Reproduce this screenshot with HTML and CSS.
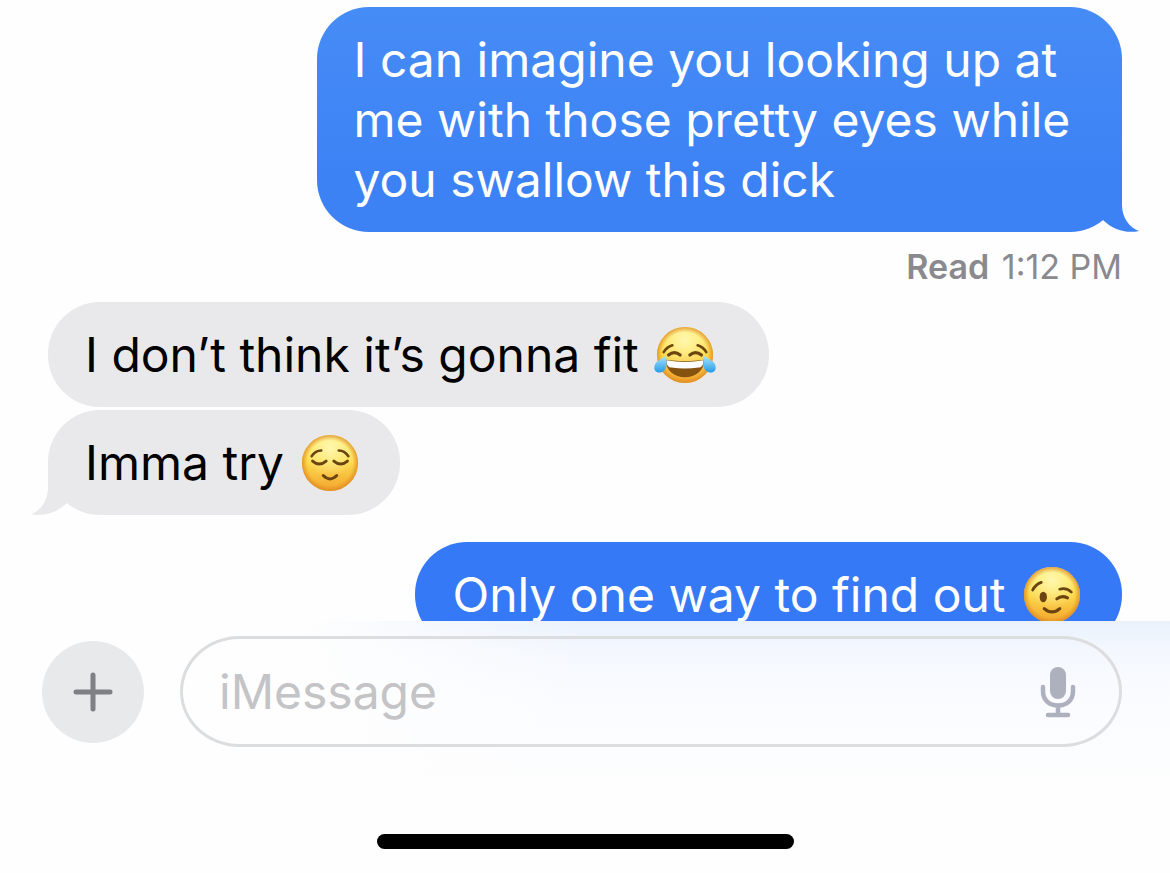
FILE: index.html
```html
<!DOCTYPE html>
<html lang="en">
    <head>
        <meta charset="utf-8">
        <title>Messages</title>
        <link rel="stylesheet" href="styles.css">
    </head>
    <body>
        <svg class="defs" aria-hidden="true">
            <defs>
                <linearGradient id="face" x1="0" y1="0" x2="0" y2="1">
                    <stop offset="0" stop-color="#fff073"/>
                    <stop offset=".45" stop-color="#fddc4c"/>
                    <stop offset="1" stop-color="#f3a52f"/>
                </linearGradient>
                <radialGradient id="edge">
                    <stop offset=".8" stop-color="#e08a1e" stop-opacity="0"/>
                    <stop offset="1" stop-color="#d98420" stop-opacity=".75"/>
                </radialGradient>
                <radialGradient id="shine" cx=".5" cy=".25" r=".5">
                    <stop offset="0" stop-color="#fffbc0" stop-opacity=".8"/>
                    <stop offset="1" stop-color="#fffbc0" stop-opacity="0"/>
                </radialGradient>
                <linearGradient id="tear" x1="0" y1="0" x2="0" y2="1">
                    <stop offset="0" stop-color="#a9e4fd"/>
                    <stop offset="1" stop-color="#269be8"/>
                </linearGradient>
                <g id="head">
                    <circle cx="32" cy="32" r="29" fill="url(#face)"/>
                    <circle cx="32" cy="32" r="29" fill="url(#shine)"/>
                    <circle cx="32" cy="32" r="29" fill="url(#edge)"/>
                </g>
            </defs>
        </svg>
        <main class="chat">
            <div class="bubble sent first">
                I can imagine you looking up at me with those pretty eyes while you swallow this dick
                <svg class="tail" viewBox="0 0 50 52" aria-hidden="true"><path d="M32 0V25C32 38 40 48 49 51C36 54 22 49 13 40L0 0Z"/></svg>
            </div>
            <div class="receipt"><b>Read</b> 1:12 PM</div>
            <div class="bubble received">I don’t think it’s gonna fit <svg class="emoji" viewBox="0 0 64 64" role="img" aria-label="face with tears of joy">
                    <use href="#head"/>
                    <g fill="none" stroke="#6b4410" stroke-width="3.2" stroke-linecap="round">
                        <path d="M10 29Q13 24 19 22M54 29Q51 24 45 22" stroke-width="2.6"/>
                        <path d="M15 32Q21 27 27 32M37 32Q43 27 49 32"/>
                    </g>
                    <path d="M12 37Q32 40 52 37C52 48 43 55 32 55S12 48 12 37Z" fill="#85530f"/>
                    <path d="M13 37.5Q32 41 51 37.5C51 43 49 45 46 45Q32 47 18 45C15 45 13 43 13 37.5Z" fill="#fff"/>
                    <path d="M12 33C14 39 14 50 6 50C-1 50 -1 43 3 39Q7 36 12 33ZM52 33C50 39 50 50 58 50C65 50 65 43 61 39Q57 36 52 33Z" fill="url(#tear)"/>
                </svg>&nbsp;</div>
            <div class="bubble received last">Imma try <svg class="emoji" viewBox="0 0 64 64" role="img" aria-label="relieved face">
                    <use href="#head"/>
                    <g fill="none" stroke="#6b4410" stroke-width="3" stroke-linecap="round">
                        <path d="M13 25Q17 19 23 19M51 25Q47 19 41 19" stroke-width="2.6"/>
                        <path d="M14 30Q21 36 28 30M36 30Q43 36 50 30"/>
                        <path d="M25 45Q32 52 39 45"/>
                    </g>
                </svg>
                <svg class="tail" viewBox="0 0 50 52" aria-hidden="true"><path d="M32 0V25C32 38 40 48 49 51C36 54 22 49 13 40L0 0Z"/></svg>
            </div>
            <div class="bubble sent reply">Only one way to find out <svg class="emoji" viewBox="0 0 64 64" role="img" aria-label="winking face">
                    <use href="#head"/>
                    <ellipse cx="23" cy="34" rx="3.8" ry="5.4" fill="#6b4410"/>
                    <g fill="none" stroke="#6b4410" stroke-width="3.2" stroke-linecap="round">
                        <path d="M12 27Q15 21 21 19M40 26Q47 24 52 29" stroke-width="2.8"/>
                        <path d="M37 36Q42 32 48 35"/>
                        <path d="M24 46Q32 53 40 46"/>
                    </g>
                </svg></div>
        </main>
        <footer class="dock">
            <form class="composer">
                <button class="add" type="button" aria-label="Add attachment">
                    <svg viewBox="0 0 40 40"><path d="M20 3V37M3 20H37"/></svg>
                </button>
                <div class="field">
                    <input type="text" placeholder="iMessage" aria-label="iMessage">
                    <button class="mic" type="button" aria-label="Dictate">
                        <svg viewBox="0 0 36 52">
                            <rect x="10" y="1" width="16" height="32" rx="8"/>
                            <path d="M3 21V25C3 34 9 39.5 18 39.5S33 34 33 25V21M18 40V49M8 49H28"/>
                        </svg>
                    </button>
                </div>
            </form>
            <div class="home"></div>
        </footer>
    </body>
</html>
```
FILE: styles.css
```css
body{
    margin: 0;
    height: 100vh;
    display: flex;
    flex-direction: column;
    background: #fefefe;
    font-family: Inter, "Liberation Sans", sans-serif;
}
.defs{
    position: absolute;
    width: 0;
    height: 0;
}
.chat{
    flex: 1;
    min-height: 0;
    overflow: hidden;
    box-sizing: border-box;
    padding: 7px 48px 0;
    display: flex;
    flex-direction: column;
    align-items: flex-start;
}
.bubble{
    position: relative;
    flex: none;
    box-sizing: border-box;
    max-width: 75%;
    padding: 23px 37px 22px;
    border-radius: 52px;
    font-size: 48px;
    line-height: 60px;
}
.sent{
    align-self: flex-end;
    color: #fff;
    background: #3579f6;
}
.first{
    background: linear-gradient(#468cf6, #3d82f5 76%);
}
.received{
    color: #000;
    background: #e9e9eb;
}
.last{
    margin-top: 3px;
}
.reply{
    margin-top: 27px;
}
.tail{
    position: absolute;
    right: -18px;
    bottom: 0;
    width: 50px;
    height: 52px;
    fill: #3d82f5;
}
.received .tail{
    right: auto;
    left: -18px;
    transform: scaleX(-1);
    fill: #e9e9eb;
}
.emoji{
    width: 62px;
    height: 62px;
    margin: -4px 2px;
    vertical-align: -10px;
}
.receipt{
    align-self: flex-end;
    padding: 15px 0;
    font-size: 34px;
    line-height: 40px;
    color: #8a8a8e;
}
.receipt b{
    margin-right: 3px;
    font-weight: 600;
}
.dock{
    flex: none;
    padding: 15px 0 24px;
    background:
        linear-gradient(to right, #fefefe 26%, rgba(254, 254, 254, 0) 50%),
        linear-gradient(#e9f1fc, #f4f8fe 30px, #f9fbff 70px, #fefefe 170px);
}
.composer{
    display: flex;
    align-items: center;
    gap: 36px;
    padding: 0 48px 0 42px;
}
.add{
    flex: none;
    display: flex;
    align-items: center;
    justify-content: center;
    width: 102px;
    height: 102px;
    padding: 0;
    border: none;
    border-radius: 50%;
    background: #e8e9eb;
}
.add svg{
    width: 40px;
    height: 40px;
    fill: none;
    stroke: #7f8084;
    stroke-width: 5;
    stroke-linecap: round;
}
.field{
    flex: 1;
    min-width: 0;
    display: flex;
    align-items: center;
    height: 105px;
    padding: 0 43px 0 36px;
    border: 3px solid #dcdddf;
    border-radius: 60px / 56px;
}
.field input{
    flex: 1;
    min-width: 0;
    padding: 0;
    border: none;
    outline: none;
    background: none;
    font: 48px/60px Inter, "Liberation Sans", sans-serif;
}
.field input::placeholder{
    color: #c4c4c7;
    opacity: 1;
}
.mic{
    display: flex;
    padding: 0;
    border: none;
    background: none;
}
.mic svg{
    width: 36px;
    height: 52px;
    fill: #adb1be;
}
.mic path{
    fill: none;
    stroke: #adb1be;
    stroke-width: 4.5;
    stroke-linecap: round;
}
.home{
    width: 417px;
    max-width: 60%;
    height: 15px;
    margin: 87px auto 0;
    border-radius: 8px;
    background: #000;
}
```
